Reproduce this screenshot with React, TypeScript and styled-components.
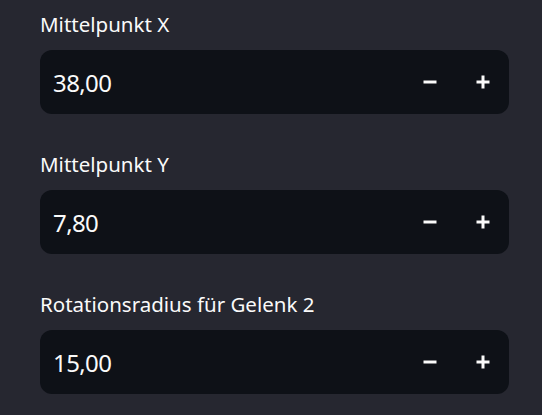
import React from "react";
import styled, { createGlobalStyle } from "styled-components";

const GlobalStyle = createGlobalStyle`
  html, body { margin: 0; padding: 0; background: #262730; }
  body { font-family: "Noto Sans", "Liberation Sans", sans-serif; color: #fafafa; }
`;

const Page = styled.div`
  display: flex;
  flex-direction: column;
  gap: 36px;
  padding: 10px 33px 0 40px;
`;

const Field = styled.div`
  display: flex;
  flex-direction: column;
`;

const Label = styled.label`
  height: 40px;
  font-size: 20.5px;
  line-height: 29px;
  color: #fafafa;
`;

const InputRow = styled.div`
  display: flex;
  height: 64px;
  border-radius: 12px;
  background: #0e1117;
  overflow: hidden;
`;

const Value = styled.input`
  flex: 1;
  min-width: 0;
  border: none;
  outline: none;
  background: transparent;
  color: #fafafa;
  font-family: inherit;
  font-size: 24px;
  letter-spacing: -0.6px;
  padding: 0 0 0 13px;
`;

const StepButton = styled.button`
  width: 53px;
  border: none;
  background: transparent;
  display: flex;
  align-items: center;
  justify-content: center;
  padding: 0;
  cursor: pointer;
`;

const Minus = () => (
  <svg width="14" height="14" viewBox="0 0 14 14">
    <rect x="0.5" y="5.5" width="13" height="3" fill="#fafafa" />
  </svg>
);

const Plus = () => (
  <svg width="14" height="14" viewBox="0 0 14 14">
    <rect x="0.5" y="5.5" width="13" height="3" fill="#fafafa" />
    <rect x="5.5" y="0.5" width="3" height="13" fill="#fafafa" />
  </svg>
);

const fields = [
  { label: "Mittelpunkt X", value: "38,00" },
  { label: "Mittelpunkt Y", value: "7,80" },
  { label: "Rotationsradius für Gelenk 2", value: "15,00" },
];

export default function App() {
  return (
    <>
      <GlobalStyle />
      <Page>
        {fields.map((f) => (
          <Field key={f.label}>
            <Label>{f.label}</Label>
            <InputRow>
              <Value defaultValue={f.value} />
              <StepButton aria-label="decrement">
                <Minus />
              </StepButton>
              <StepButton aria-label="increment">
                <Plus />
              </StepButton>
            </InputRow>
          </Field>
        ))}
      </Page>
    </>
  );
}
